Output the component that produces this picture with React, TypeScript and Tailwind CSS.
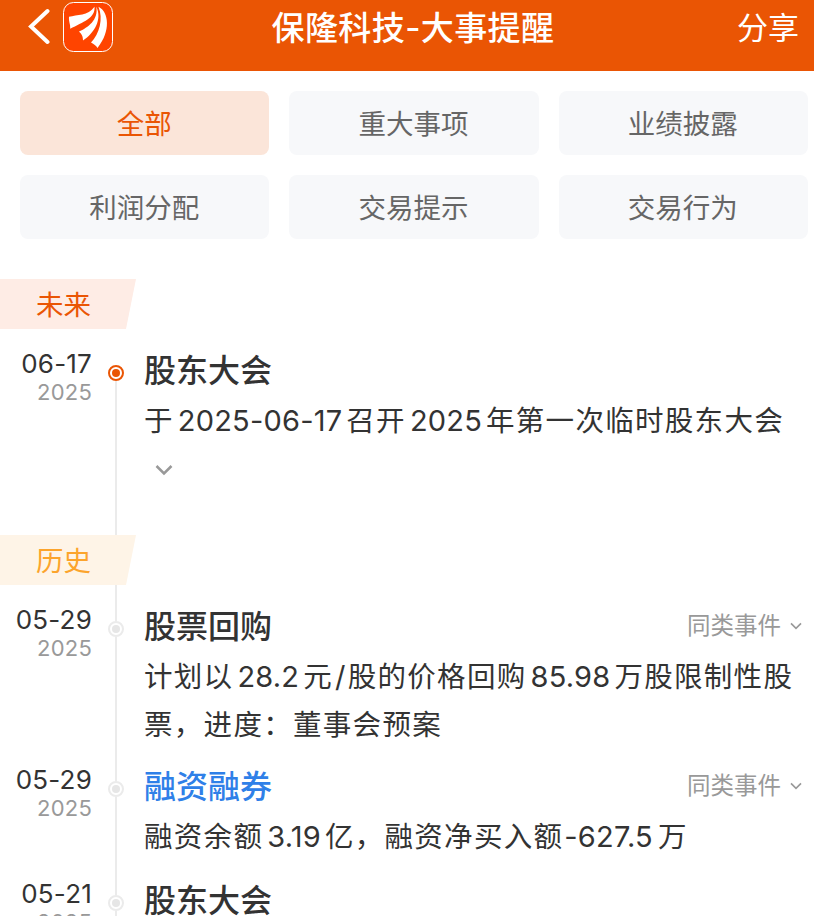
import { Fragment } from "react";
import clsx from "clsx";

const tabs = ["全部", "重大事项", "业绩披露", "利润分配", "交易提示", "交易行为"];

type EventItem = {
  date: string;
  title: string;
  lines: string[];
  link?: boolean;
  similar?: boolean;
  future?: boolean;
  className: string;
};

const futureEvents: EventItem[] = [
  {
    date: "06-17",
    title: "股东大会",
    lines: ["于2025-06-17召开2025年第一次临时股东大会"],
    future: true,
    className: "h-[206px] pt-[17px]",
  },
];

const historyEvents: EventItem[] = [
  {
    date: "05-29",
    title: "股票回购",
    lines: ["计划以28.2元/股的价格回购85.98万股限制性股", "票，进度：董事会预案"],
    similar: true,
    className: "h-[177px] pt-[17px]",
  },
  {
    date: "05-29",
    title: "融资融券",
    lines: ["融资余额3.19亿，融资净买入额-627.5万"],
    link: true,
    similar: true,
    className: "h-[114px]",
  },
  {
    date: "05-21",
    title: "股东大会",
    lines: [],
    className: "h-[114px]",
  },
];

function Logo() {
  return (
    <svg className="ml-[13px] h-[50px] w-[50px]" viewBox="0 0 50 50">
      <rect x="0.5" y="0.5" width="49" height="49" rx="10" fill="#ff4400" stroke="#fff" />
      <g fill="#fff">
        <path d="M6 14.8C14 12.5 25 14 31.5 4.7C32.5 16 20 20 7.2 26.8C7.6 22 5.6 20 6 14.8Z" />
        <path d="M33.3 4.7C39.5 17 31.5 31 20 38.5C20 34 18.5 32 16 29.5C25 25.5 35.5 18 33.3 4.7Z" />
        <path d="M35.5 4.7C46 10 48 29 34.5 46C33 43.5 31 42.5 28 40.5C36.5 31.5 40.5 17 35.5 4.7Z" />
      </g>
    </svg>
  );
}

function Chevron({ className }: { className: string }) {
  return (
    <svg className={className} viewBox="0 0 18 12" fill="none" stroke="currentColor">
      <path d="M1.5 2L9 9.5L16.5 2" />
    </svg>
  );
}

// Numbers get a little breathing room between the Chinese characters.
function MixedText({ text }: { text: string }) {
  const parts = text.split(/([0-9./-]+)/);
  return (
    <>
      {parts.map((part, i) =>
        /^[0-9./-]+$/.test(part) ? (
          <span
            key={i}
            className={clsx(
              "text-[29px] tracking-[0.2px]",
              part[0] === "-" ? "mr-[5px] ml-px" : part === "/" ? "mr-[2px] ml-[2px]" : "mx-1"
            )}
          >
            {part}
          </span>
        ) : (
          <Fragment key={i}>{part}</Fragment>
        )
      )}
    </>
  );
}

function Badge({ label, className }: { label: string; className: string }) {
  return (
    <div
      className={clsx(
        "h-[50px] w-[136px] pl-9 text-[27.5px] leading-[52px] [clip-path:polygon(0_0,100%_0,126px_100%,0_100%)]",
        className
      )}
    >
      {label}
    </div>
  );
}

function Event({ item }: { item: EventItem }) {
  const first = item.className.includes("pt-");
  return (
    <div className="flex">
      <div className={clsx("w-[92px] shrink-0 text-right", item.className)}>
        <div className="pt-[3px] text-[26px] leading-[30px] tracking-[0.2px] text-[#333]">
          {item.date}
        </div>
        <div className="text-[22px] leading-[26px] tracking-[0.2px] text-[#999]">2025</div>
      </div>
      <div className="flex w-12 shrink-0 flex-col items-center">
        <div
          className={clsx(
            "w-[2px] shrink-0",
            first ? "h-9" : "h-[19px]",
            item.future ? "bg-transparent" : "bg-[#ebebeb]"
          )}
        />
        <div
          className={clsx(
            "flex h-4 w-4 shrink-0 items-center justify-center rounded-full border-2",
            item.future ? "border-[#ea5504]" : "border-[#ebebeb]"
          )}
        >
          <div className={clsx("h-2 w-2 rounded-full", item.future ? "bg-[#ea5504]" : "bg-[#e6e6e6]")} />
        </div>
        <div className="w-[2px] flex-1 bg-[#ebebeb]" />
      </div>
      <div className={clsx("min-w-0 flex-1 pl-1", item.className)}>
        <div className="flex h-[49px] items-start justify-between pr-3">
          <h2
            className={clsx(
              "text-[32px] leading-[49px] font-medium",
              item.link ? "text-[#2f80e8]" : "text-[#333]"
            )}
          >
            {item.title}
          </h2>
          {item.similar && (
            <div className="flex items-center text-[23.5px] leading-[48px] text-[#999]">
              同类事件
              <Chevron className="ml-[9px] h-2 w-3 stroke-[2.5]" />
            </div>
          )}
        </div>
        <div className="pt-[2px] text-[28.5px] leading-[48px] tracking-[1.3px] whitespace-nowrap text-[#333]">
          {item.lines.map((line) => (
            <p key={line} className="h-12">
              <MixedText text={line} />
            </p>
          ))}
        </div>
        {item.future && <Chevron className="mt-[19px] ml-[11px] h-3 w-[18px] stroke-[2.5] text-[#999]" />}
      </div>
    </div>
  );
}

export default function App() {
  return (
    <div className="h-[916px] w-[814px] overflow-hidden bg-white font-[Inter,'Noto_Sans_CJK_SC',sans-serif]">
      <header className="grid h-[71px] grid-cols-[1fr_auto_1fr] items-start bg-[#ea5504] text-white">
        <div className="flex pt-[2px] pl-7">
          <svg className="mt-[6px] h-[37px] w-[22px]" viewBox="0 0 22 37" fill="none" stroke="#fff">
            <path d="M19.5 3L3 18.5L19.5 34" strokeWidth="4" strokeLinecap="round" />
          </svg>
          <Logo />
        </div>
        <h1 className="pl-3 text-[33px] leading-[56px] font-medium tracking-[0.4px]">保隆科技-大事提醒</h1>
        <div className="pr-[15px] text-right text-[31px] leading-[56px]">分享</div>
      </header>

      <nav className="grid grid-cols-3 gap-5 pt-5 pr-[6px] pl-5">
        {tabs.map((tab, i) => (
          <button
            key={tab}
            className={clsx(
              "h-16 rounded-lg pt-px pr-px text-[27.5px] leading-[64px]",
              i === 0 ? "bg-[#fbe5d9] text-[#ea5504]" : "bg-[#f7f8fa] text-[#666]"
            )}
          >
            {tab}
          </button>
        ))}
      </nav>

      <main className="pt-10">
        <Badge label="未来" className="bg-[#feece5] text-[#ea5504]" />
        {futureEvents.map((item) => (
          <Event key={item.date} item={item} />
        ))}
        <Badge label="历史" className="bg-[#fef4e7] text-[#fca42c]" />
        {historyEvents.map((item) => (
          <Event key={item.title} item={item} />
        ))}
      </main>
    </div>
  );
}
